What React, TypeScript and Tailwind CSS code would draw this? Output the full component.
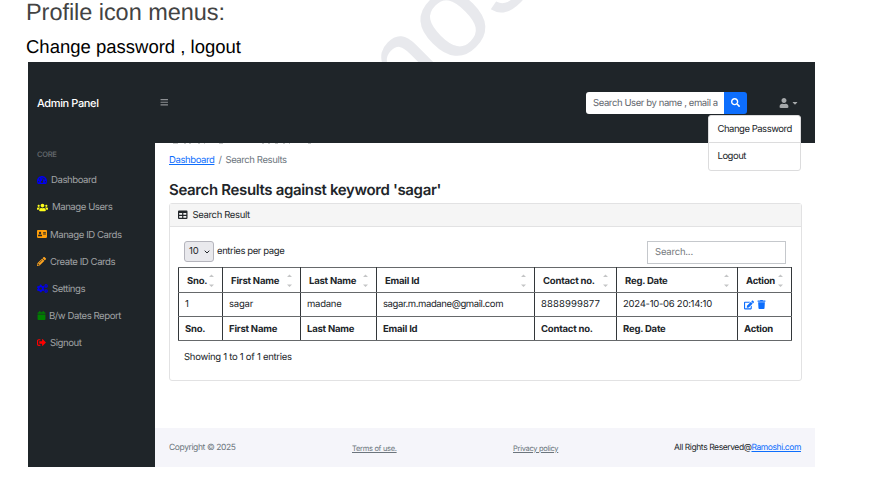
import type { ReactNode } from "react";
import {
  FaAddressCard,
  FaBars,
  FaCalendar,
  FaCaretDown,
  FaCogs,
  FaEdit,
  FaPencilAlt,
  FaSearch,
  FaSignOutAlt,
  FaTable,
  FaTachometerAlt,
  FaTrash,
  FaUser,
  FaUsers,
} from "react-icons/fa";

const navItems: { label: string; icon: ReactNode; gap: string }[] = [
  { label: "Dashboard", icon: <FaTachometerAlt className="text-[10px] text-[#0000ee]" />, gap: "gap-1" },
  { label: "Manage Users", icon: <FaUsers className="text-[11px] text-[#ffff1a]" />, gap: "gap-1" },
  { label: "Manage ID Cards", icon: <FaAddressCard className="text-[10px] text-[#ff9f0a]" />, gap: "gap-[3px]" },
  { label: "Create ID Cards", icon: <FaPencilAlt className="text-[9px] text-[#ffa51f]" />, gap: "gap-1" },
  { label: "Settings", icon: <FaCogs className="text-[11px] text-[#0000ee]" />, gap: "gap-1" },
  { label: "B/w Dates Report", icon: <FaCalendar className="text-[9px] text-[#008000]" />, gap: "gap-[3px]" },
  { label: "Signout", icon: <FaSignOutAlt className="text-[9px] text-[#ff0000]" />, gap: "gap-1" },
];

const columns = ["Sno.", "First Name", "Last Name", "Email Id", "Contact no.", "Reg. Date", "Action"];
const widths = ["w-[44px]", "w-[78px]", "w-[76px]", "w-[158px]", "w-[82px]", "w-[121px]", "w-[54px]"];
const record = [
  { value: "1", style: "tracking-normal" },
  { value: "sagar", style: "tracking-[-0.2px]" },
  { value: "madane", style: "tracking-[-0.25px]" },
  { value: "sagar.m.madane@gmail.com", style: "tracking-[-0.4px]" },
  { value: "8888999877", style: "tracking-[0.1px]" },
  { value: "2024-10-06 20:14:10", style: "tracking-[-0.26px]" },
];

function SortMarks() {
  return (
    <svg viewBox="0 0 5 13" className="h-[13px] w-[5px] shrink-0 fill-[#c4c5c6]">
      <path d="M0 3 2.5 0.5 5 3Z M0 10.5 2.5 13 5 10.5Z" />
    </svg>
  );
}

function Sidebar() {
  return (
    <nav className="w-[127px] shrink-0 bg-[#1f2529] pt-[6px] pl-[9px] text-[#a0a3a5]">
      <div className="h-[17.5px] text-[7.5px] leading-[11px] font-semibold tracking-[-0.3px] text-[#616569]">CORE</div>
      {navItems.map((item) => (
        <a key={item.label} className={`flex h-[27.1px] items-center text-[9.6px] tracking-[-0.45px] whitespace-nowrap ${item.gap}`}>
          {item.icon}
          <span className="pt-[3px]">{item.label}</span>
        </a>
      ))}
    </nav>
  );
}

function ResultsTable() {
  return (
    <table className="mt-[3px] ml-[8px] w-[614px] table-fixed border-collapse text-left text-[9.5px] text-[#212529]">
      <thead>
        <tr className="h-[25px]">
          {columns.map((c, i) => (
            <th key={c} className={`border border-x-[#33373a] border-y-[#66696b] p-0 font-bold tracking-[-0.2px] ${widths[i]}`}>
              <div className="flex items-center justify-between pr-[8px] pl-[8px]">
                <span className="pt-[4px] whitespace-nowrap">{c}</span>
                <SortMarks />
              </div>
            </th>
          ))}
        </tr>
      </thead>
      <tbody>
        <tr className="h-[24px]">
          {record.map((cell) => (
            <td
              key={cell.value}
              className={`border border-x-[#33373a] border-y-[#66696b] p-0 pt-[2px] pl-[6px] whitespace-nowrap ${cell.style}`}
            >
              {cell.value}
            </td>
          ))}
          <td className="border border-x-[#33373a] border-y-[#66696b] p-0 pl-[6px]">
            <div className="flex items-center gap-[3px] text-[#0d6efd]">
              <FaEdit className="text-[10px]" />
              <FaTrash className="text-[9px]" />
            </div>
          </td>
        </tr>
      </tbody>
      <tfoot>
        <tr className="h-[24px]">
          {columns.map((c) => (
            <th
              key={c}
              className="border border-x-[#33373a] border-y-[#66696b] p-0 pt-[3px] pl-[6px] font-bold tracking-[-0.2px] whitespace-nowrap"
            >
              {c}
            </th>
          ))}
        </tr>
      </tfoot>
    </table>
  );
}

function Topbar() {
  return (
    <header className="flex h-[81px] items-center bg-[#1f2529] pl-[9px]">
      <span className="w-[123px] text-[11px] leading-4 font-medium tracking-[-0.38px] text-white">Admin Panel</span>
      <FaBars className="text-[8.5px] text-[#8d9093]" />
      <div className="ml-[417px] flex h-[22px] w-[161px] overflow-hidden rounded-[3px]">
        <div className="flex w-[138px] items-center bg-white pr-[5px] pl-[7.5px] text-[9.5px] tracking-[-0.4px] text-[#5f666d]">
          <span className="overflow-hidden pt-[3px] whitespace-nowrap">Search User by name , email a</span>
        </div>
        <button className="flex flex-1 items-center justify-center bg-[#0d6efd] text-[9px] text-white">
          <FaSearch />
        </button>
      </div>
      <div className="relative ml-[32px] flex items-center gap-[2px] text-[#a5a8aa]">
        <FaUser className="text-[10px]" />
        <FaCaretDown className="text-[8px]" />
        <div className="absolute top-[17px] right-[-2.5px] z-10 h-[56px] w-[93px] rounded-[3px] border border-[#dcdcdd] bg-white text-[9.5px] tracking-[-0.48px] text-[#212529]">
          <div className="flex h-[27px] items-center border-b border-[#dcdcdd] pt-[3px] pl-[8.5px] whitespace-nowrap">Change Password</div>
          <div className="flex h-[27px] items-center pt-[3px] pl-[8.5px]">Logout</div>
        </div>
      </div>
    </header>
  );
}

function Content() {
  return (
    <main className="flex min-w-0 flex-1 flex-col bg-white text-[9.5px] tracking-[-0.35px] text-[#212529]">
      <svg viewBox="0 0 146 1" className="ml-[14px] h-px w-[146px] stroke-[#c9cbcc]">
        <path d="M4 .5h5M15 .5h2M20 .5h2M29 .5h2M35 .5h1M50 .5h4M93 .5h2M99 .5h2M106 .5h3M114 .5h2M120 .5h1M139 .5h3" />
      </svg>
      <div className="flex gap-1 pt-[10px] pl-[14px] leading-[13px] tracking-[-0.4px] text-[#6c757d]">
        <a className="text-[#0d6efd] underline">Dashboard</a>
        <span>/</span>
        <span>Search Results</span>
      </div>
      <h1 className="mt-[12px] ml-[14px] text-[15px] leading-[22px] font-semibold tracking-[-0.35px]">
        Search Results against keyword &apos;sagar&apos;
      </h1>
      <section className="mt-[2px] ml-[14px] h-[178px] w-[633px] rounded-[3px] border border-[#e2e2e3]">
        <div className="flex h-[23px] items-center gap-[5px] border-b border-[#e2e2e3] bg-[#f5f5f5] pl-[8px]">
          <FaTable className="text-[9.5px]" />
          <span className="pt-[3px]">Search Result</span>
        </div>
        <div className="flex h-[37px] items-end justify-between pr-[15px] pl-[14px]">
          <div className="flex items-center gap-[3px] pb-[2px]">
            <div className="flex h-[21px] w-[30px] items-center justify-between rounded-[3px] border border-[#b5b5bd] bg-[#e9e9ed] pr-[3px] pl-[4px]">
              <span className="pt-[2px] tracking-normal">10</span>
              <svg viewBox="0 0 6 4" className="h-[4px] w-[6px] fill-none stroke-[#212529]">
                <path d="m.7.7 2.3 2.3L5.3.7" />
              </svg>
            </div>
            <span className="pt-[2px] tracking-[-0.4px]">entries per page</span>
          </div>
          <div className="flex h-[23px] w-[139px] items-center border border-[#c5c8cc] pt-[2px] pl-[7px] tracking-[-0.2px] text-[#75797d]">
            Search...
          </div>
        </div>
        <ResultsTable />
        <p className="mt-[10px] pl-[14px] leading-[13px] tracking-[-0.27px]">Showing 1 to 1 of 1 entries</p>
      </section>
      <footer className="mt-auto flex h-[39px] items-center bg-[#f5f5fa] pt-[2px] pr-[14px] pl-[14px] text-[8.5px] text-[#6c757d]">
        <span className="w-[183px] tracking-[-0.4px]">Copyright © 2025</span>
        <a className="w-[161px] text-[7.5px] tracking-[-0.3px] underline">Terms of use.</a>
        <a className="text-[7.5px] tracking-[-0.3px] underline">Privacy policy</a>
        <span className="ml-auto tracking-[-0.42px] text-[#212529]">
          All Rights Reserved@<a className="text-[#0d6efd] underline">Ramoshi.com</a>
        </span>
      </footer>
    </main>
  );
}

export default function App() {
  return (
    <div className="h-[494px] w-[886px] overflow-hidden bg-white font-['Inter',sans-serif] [text-rendering:geometricPrecision]">
      <div className="relative h-[62px] overflow-hidden pl-[26px] font-['Liberation_Sans',Arial,sans-serif]">
        <span
          aria-hidden="true"
          className="absolute top-[-29px] left-[319px] -rotate-45 text-[120px] leading-[120px] text-[#e8e9ed]"
        >
          mos
        </span>
        <h2 className="relative text-[23.5px] leading-[24px] tracking-[-0.05px] text-[#434343]">Profile icon menus:</h2>
        <p className="relative mt-[12px] text-[18.5px] leading-[22px] text-black">Change password , logout</p>
      </div>
      <div className="ml-[28px] flex h-[405px] w-[787px] flex-col">
        <Topbar />
        <div className="flex min-h-0 flex-1">
          <Sidebar />
          <Content />
        </div>
      </div>
    </div>
  );
}
